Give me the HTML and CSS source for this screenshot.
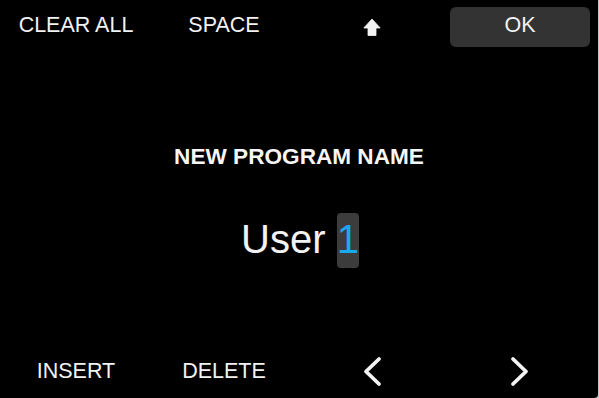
FILE: index.html
```html
<!DOCTYPE html>
<html>
<head>
<meta charset="utf-8">
<link rel="stylesheet" href="styles.css">
</head>
<body>
<div class="screen">
  <div class="bar top">
    <div class="key">CLEAR ALL</div>
    <div class="key">SPACE</div>
    <div class="key"><svg class="shift" width="18" height="18" viewBox="0 0 18 18"><path d="M9 1 L17.2 10 L13 10 L13 17.5 L5 17.5 L5 10 L0.8 10 Z" fill="#f4f4f4" stroke="#f4f4f4" stroke-width="0.8" stroke-linejoin="round"/></svg></div>
    <div class="key ok">OK</div>
  </div>
  <div class="title">NEW PROGRAM NAME</div>
  <div class="name">User <span class="cursor">1</span></div>
  <div class="bar bottom">
    <div class="key">INSERT</div>
    <div class="key">DELETE</div>
    <div class="key"><svg width="20" height="32" viewBox="0 0 20 32"><polyline points="17,3 4,15.5 17,28" fill="none" stroke="#f4f4f4" stroke-width="3.8" stroke-linecap="round" stroke-linejoin="round"/></svg></div>
    <div class="key"><svg width="20" height="32" viewBox="0 0 20 32"><polyline points="3,3 16,15.5 3,28" fill="none" stroke="#f4f4f4" stroke-width="3.8" stroke-linecap="round" stroke-linejoin="round"/></svg></div>
  </div>
</div>
</body>
</html>
```
FILE: styles.css
```css
html {
  background: #c4c4c4;
}
body {
  margin: 0;
  width: 599px;
  height: 398px;
  overflow: hidden;
}
.screen {
  width: 598px;
  height: 398px;
  background: #000;
  border-bottom-right-radius: 4px;
  display: flex;
  flex-direction: column;
  font-family: "Liberation Sans", Arial, sans-serif;
  color: #f2f2f2;
}
.bar {
  display: grid;
  grid-template-columns: repeat(4, 148px);
  padding-left: 2px;
}
.top {
  padding-top: 7px;
}
.key {
  height: 40px;
  display: flex;
  align-items: center;
  justify-content: center;
  font-size: 21.5px;
  white-space: nowrap;
}
.top .key {
  box-sizing: border-box;
  padding-bottom: 4px;
}
.top .key .shift {
  margin-top: 4px;
}
.ok {
  margin: 0 4px;
  background: #333333;
  border-radius: 6px;
}
.title {
  margin-top: 97px;
  text-align: center;
  font-weight: bold;
  font-size: 22.6px;
  line-height: 26px;
  color: #f6f6f6;
}
.name {
  margin-top: 42px;
  text-align: center;
  font-size: 40px;
  line-height: 55px;
  padding-left: 2px;
}
.cursor {
  background: #3c3c3c;
  color: #1aa9ee;
  border-radius: 4px;
  padding: 4px 0 6.5px;
}
.bottom {
  margin-top: 84px;
}
.bottom .key svg {
  margin-top: 2px;
}
```
